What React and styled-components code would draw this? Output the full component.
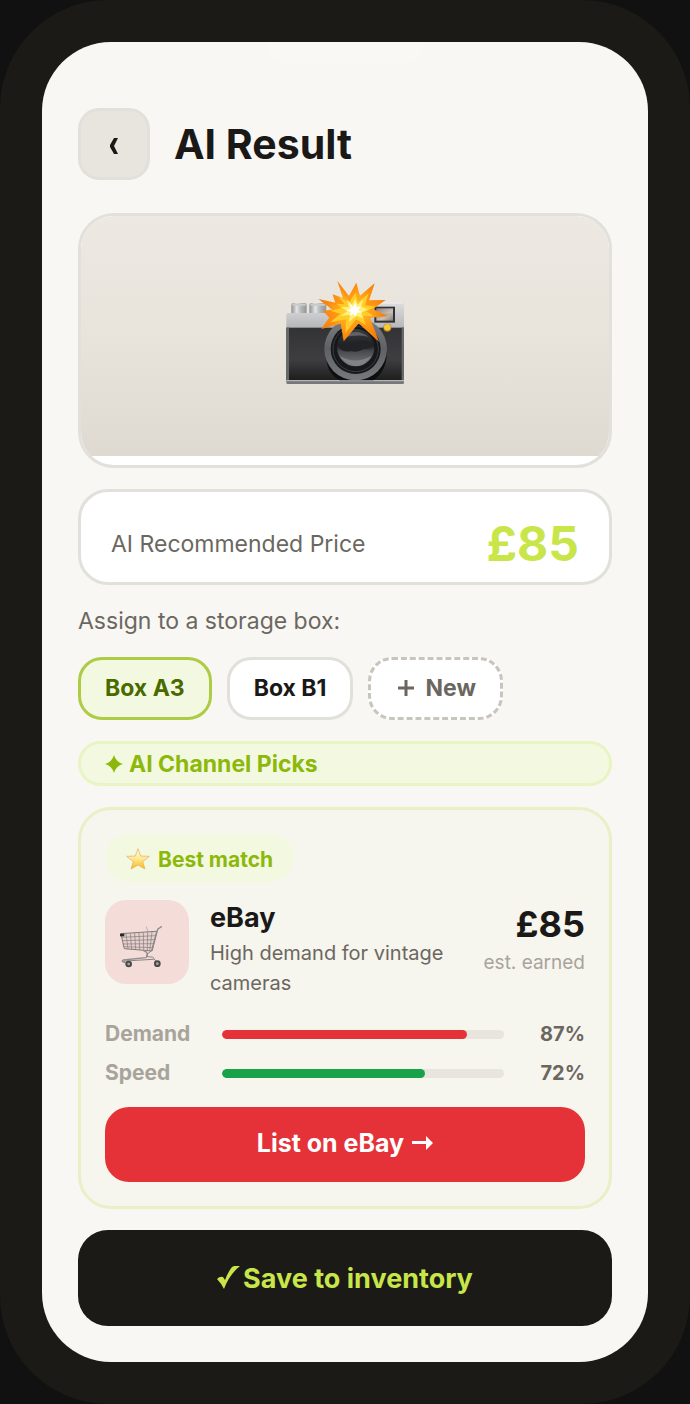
import { useState } from "react";
import styled, { createGlobalStyle } from "styled-components";

const GlobalStyle = createGlobalStyle`
  * {
    box-sizing: border-box;
  }

  body {
    margin: 0;
    background-color: #111111;
    color: #1a1917;
    font-family: Inter, "Liberation Sans", sans-serif;
  }

  h1, h2, p {
    margin: 0;
  }

  button {
    font-family: inherit;
    cursor: pointer;
  }
`;

const Phone = styled.div`
  padding: 42px;
  background-color: #1b1a17;
  border-radius: 108px;
`;

const Screen = styled.main`
  display: flex;
  flex-direction: column;
  padding: 0 36px 36px;
  background-color: #f8f7f3;
  border-radius: 69px;
  overflow: hidden;
`;

const Notch = styled.div`
  align-self: center;
  width: 156px;
  height: 21px;
  background-color: #f9f8f4;
  border-radius: 0 0 18px 18px;
`;

const Header = styled.header`
  display: flex;
  align-items: center;
  gap: 24px;
  margin: 45px 0 33px;
`;

const BackButton = styled.button`
  display: flex;
  align-items: center;
  justify-content: center;
  width: 72px;
  height: 72px;
  padding: 0;
  background-color: #e8e5df;
  border: 3px solid #e2e0da;
  border-radius: 21px;
`;

const Title = styled.h1`
  font-size: 41px;
  line-height: 48px;
  font-weight: 700;
`;

const Stack = styled.div`
  display: flex;
  flex-direction: column;
  gap: 21px;
`;

const PhotoCard = styled.div`
  padding-bottom: 9px;
  background-color: #ffffff;
  border: 3px solid #e2e0da;
  border-radius: 36px;
  overflow: hidden;
`;

const Photo = styled.div`
  display: flex;
  align-items: center;
  justify-content: center;
  height: 240px;
  background: linear-gradient(#ede8e1 0%, #e8e4dc 50%, #dedad2 100%);
`;

const PriceCard = styled.div`
  display: flex;
  align-items: center;
  justify-content: space-between;
  padding: 22px 30px 8px;
  background-color: #ffffff;
  border: 3px solid #e2e0da;
  border-radius: 30px;
`;

const Label = styled.p`
  font-size: 23px;
  line-height: 30px;
  color: #6b6760;
`;

const Price = styled.p`
  font-size: 48px;
  line-height: 60px;
  font-weight: 700;
  color: #c8e64a;
`;

const Chips = styled.div`
  display: flex;
  flex-wrap: wrap;
  gap: 15px;
`;

const Chip = styled.button`
  display: flex;
  align-items: center;
  gap: 9px;
  height: 63px;
  padding: 0 24px 2px;
  font-size: 23px;
  font-weight: 700;
  color: ${(p) => (p.$selected ? "#4a6a00" : "#1a1917")};
  background-color: ${(p) => (p.$selected ? "#f3f9e0" : "#ffffff")};
  border: 3px solid ${(p) => (p.$selected ? "#aecb45" : "#e2e0da")};
  border-radius: 24px;
`;

const NewChip = styled(Chip)`
  color: #6b6760;
  border: 3px dashed #c8c5bc;
`;

const PicksHeading = styled.h2`
  display: flex;
  align-items: center;
  gap: 6px;
  height: 45px;
  padding: 0 24px;
  font-size: 23px;
  font-weight: 700;
  color: #8cb80a;
  background-color: #f3f9e0;
  border: 3px solid #e9f4c4;
  border-radius: 24px;
`;

const MatchCard = styled.section`
  display: flex;
  flex-direction: column;
  padding: 24px;
  background-color: #f6f5ee;
  border: 3px solid #eaefc6;
  border-radius: 33px;
`;

const Badge = styled.div`
  align-self: flex-start;
  display: flex;
  align-items: center;
  gap: 8px;
  height: 48px;
  padding: 3px 21px 0;
  font-size: 21px;
  font-weight: 700;
  color: #8cb80a;
  background-color: #f3f9e0;
  border-radius: 24px;
`;

const Channel = styled.div`
  display: flex;
  gap: 21px;
  margin-top: 18px;
`;

const ChannelIcon = styled.div`
  flex-shrink: 0;
  width: 84px;
  height: 84px;
  background-color: #f4ddd8;
  border-radius: 21px;
`;

const ChannelInfo = styled.div`
  flex: 1;
`;

const ChannelName = styled.h2`
  font-size: 27px;
  line-height: 36px;
  font-weight: 700;
`;

const ChannelNote = styled.p`
  margin-top: 2px;
  font-size: 20px;
  line-height: 30px;
  color: #6b6760;
`;

const Earned = styled.div`
  text-align: right;
`;

const EarnedPrice = styled.p`
  font-size: 36px;
  line-height: 48px;
  font-weight: 700;
`;

const EarnedLabel = styled.p`
  font-size: 19px;
  line-height: 30px;
  color: #a8a49c;
`;

const Meters = styled.div`
  display: flex;
  flex-direction: column;
  gap: 9px;
  margin-top: 21px;
`;

const Meter = styled.div`
  display: grid;
  grid-template-columns: 96px 1fr 60px;
  column-gap: 21px;
  align-items: center;
  line-height: 30px;
  font-weight: 700;
`;

const MeterLabel = styled.span`
  font-size: 21px;
  color: #a8a49c;
`;

const MeterTrack = styled.div`
  height: 9px;
  background-color: #e8e5df;
  border-radius: 5px;
  overflow: hidden;
`;

const MeterFill = styled.div`
  height: 100%;
  background-color: ${(p) => p.$color};
  border-radius: 5px;
`;

const MeterValue = styled.span`
  font-size: 20px;
  text-align: right;
  color: #6b6760;
`;

const ActionButton = styled.button`
  display: flex;
  align-items: center;
  justify-content: center;
  gap: 8px;
  height: 75px;
  margin-top: 19px;
  padding: 0 0 3px;
  font-size: 25px;
  font-weight: 700;
  color: #ffffff;
  background-color: #e53238;
  border: none;
  border-radius: 24px;
`;

const SaveButton = styled(ActionButton)`
  gap: 3px;
  height: 96px;
  margin-top: 0;
  padding: 0;
  font-size: 27px;
  color: #c8e64a;
  background-color: #1b1a17;
  border-radius: 30px;
`;

function CameraIcon() {
  return (
    <svg width="120" height="120" viewBox="45 18 360 360" role="img" aria-label="Camera with flash">
      <defs>
        <linearGradient id="silver" x1="0" y1="0" x2="0" y2="1">
          <stop offset="0" stopColor="#dededf" />
          <stop offset="1" stopColor="#b5b6b8" />
        </linearGradient>
        <linearGradient id="knob">
          <stop offset="0" stopColor="#8f9092" />
          <stop offset="0.35" stopColor="#e4e4e5" />
          <stop offset="0.6" stopColor="#b9babc" />
          <stop offset="1" stopColor="#929395" />
        </linearGradient>
        <linearGradient id="leather" x1="0" y1="0" x2="0" y2="1">
          <stop offset="0" stopColor="#333335" />
          <stop offset="0.6" stopColor="#3e3e40" />
          <stop offset="1" stopColor="#1c1c1d" />
        </linearGradient>
        <linearGradient id="ring" x1="0" y1="0" x2="0" y2="1">
          <stop offset="0" stopColor="#7d7f82" />
          <stop offset="0.5" stopColor="#5f6164" />
          <stop offset="1" stopColor="#77797c" />
        </linearGradient>
        <linearGradient id="glass" x1="0" y1="0" x2="0" y2="1">
          <stop offset="0" stopColor="#3b3c3f" />
          <stop offset="0.45" stopColor="#1f2022" />
          <stop offset="0.6" stopColor="#4a4b4e" />
          <stop offset="1" stopColor="#77787b" />
        </linearGradient>
        <linearGradient id="finder" x1="0" y1="0" x2="1" y2="1">
          <stop offset="0" stopColor="#8d857f" />
          <stop offset="0.6" stopColor="#c9c0b8" />
          <stop offset="1" stopColor="#847c76" />
        </linearGradient>
        <radialGradient id="flash" gradientUnits="userSpaceOnUse" cx="251" cy="122" r="98">
          <stop offset="0" stopColor="#ffc422" />
          <stop offset="0.5" stopColor="#ffa51a" />
          <stop offset="1" stopColor="#f57c0c" />
        </radialGradient>
      </defs>
      <rect x="64" y="99" width="46" height="34" rx="6" fill="url(#knob)" />
      <rect x="118" y="99" width="51" height="34" rx="6" fill="url(#knob)" />
      <path d="M67 104H107M121 104H166" stroke="#c9cacb" strokeWidth="6" />
      <path d="M49 135q0 -6 6 -6H176V104q0 -7 7 -7H396q6 0 6 6V175H49z" fill="url(#silver)" />
      <path d="M178 99H398" stroke="#f2f2f2" strokeWidth="3" />
      <rect x="49" y="173" width="353" height="160" fill="url(#leather)" />
      <rect x="49" y="173" width="8" height="160" fill="#666769" />
      <rect x="395" y="173" width="7" height="160" fill="#66686a" />
      <path d="M49 331H402V338q0 4 -4 4H53q-4 0 -4 -4z" fill="#77787b" />
      <path d="M49 332H402" stroke="#c6c7c8" strokeWidth="3" />
      <rect x="313" y="110" width="62" height="48" fill="#323234" />
      <rect x="319" y="115" width="50" height="37" fill="url(#finder)" />
      <path d="M320 138q18 -10 48 -2" fill="none" stroke="#b3aaa3" strokeWidth="6" />
      <path d="M168 250q0 62 42 81H310q42 -30 40 -85z" fill="#0e0e0f" />
      <circle cx="257" cy="237" r="94" fill="url(#ring)" />
      <circle cx="257" cy="237" r="75" fill="#17181a" />
      <circle cx="257" cy="237" r="68" fill="none" stroke="#3b3c3f" strokeWidth="3" />
      <circle cx="257" cy="233" r="56" fill="url(#glass)" />
      <path d="M207 235q20 -22 48 -18q30 -14 52 8q-6 14 -26 12q-18 12 -38 6q-20 6 -36 -8z" fill="#232326" />
      <path d="M216 204q38 -35 80 -3q-30 -10 -80 3z" fill="#606266" />
      <path d="M209 258q48 27 96 -1q-18 30 -48 31q-30 -2 -48 -30z" fill="#818285" />
      <circle cx="352" cy="173" r="12" fill="#ae7a13" />
      <circle cx="352" cy="172" r="10" fill="#f6c83d" />
      <path d="M202 33 237 78 259 38 270 77 314 40 297 91 347 90 309 117 354 139 300 143 327 215 266 160 221 214 212 161 154 177 178 143 159 122 187 119 145 87 196 98 188 73 219 84z" fill="url(#flash)" />
      <path d="M202 33 237 78 259 38 251 122zM314 40 297 91 347 90 251 122zM327 215 266 160 221 214 251 122zM154 177 178 143 159 122 251 122zM145 87 196 98 188 73 251 122z" fill="#ff8a0b" opacity="0.45" />
      <path d="M205 78 237 98 256 68 264 97 296 70 285 106 317 110 288 124 312 139 278 138 287 165 258 148 226 190 229 148 181 157 211 131 181 122 216 114 199 101 224 103z" fill="#ffcc29" />
      <path d="M231 88 246 104 256 85 262 104 280 88 274 110 294 118 274 128 281 147 259 137 237 157 240 135 211 137 232 124 213 112 236 111z" fill="#fff07a" />
      <path d="M239 99 249 111 257 98 260 112 273 109 265 120 276 127 261 128 257 140 250 131 239 138 243 126 229 121 243 116z" fill="#ffffff" />
    </svg>
  );
}

function StarIcon() {
  return (
    <svg width="24" height="24" viewBox="166 145 72 68" aria-hidden="true">
      <defs>
        <linearGradient id="star" x1="0" y1="0" x2="0" y2="1">
          <stop offset="0" stopColor="#fffbe9" />
          <stop offset="0.5" stopColor="#ffe98f" />
          <stop offset="1" stopColor="#fcb614" />
        </linearGradient>
      </defs>
      <path d="M202 145 210 167 236 168 216 184 223 206 202 194 181 206 188 184 168 168 194 167z" fill="url(#star)" stroke="#e3a765" strokeWidth="2" strokeLinejoin="round" />
    </svg>
  );
}

function CartIcon() {
  return (
    <svg width="84" height="84" viewBox="105 300 252 252" role="img" aria-label="Shopping cart">
      <g fill="none" strokeLinecap="round" strokeLinejoin="round">
        <path d="M153 402 163 446 245 453 260 395z" fill="#8a7f7d" fillOpacity="0.12" stroke="#827b7b" strokeWidth="3" />
        <path d="M155 412 257 407M157 422 255 419M159 432 252 431M161 440 249 443M168 402 174 446M181 401 185 447M194 400 197 448M207 399 209 449M220 398 221 450M233 397 232 451M246 396 239 452" stroke="#817979" strokeWidth="2" />
        <path d="M229 381 234 397" stroke="#a39a99" strokeWidth="2" />
        <path d="M274 380 263 388 246 451" stroke="#8a8586" strokeWidth="4" />
        <path d="M221 452Q240 460 228 473L160 480Q152 485 164 486" stroke="#918d8e" strokeWidth="4" />
        <path d="M246 451 232 462Q222 472 248 471L262 489M158 485 174 491M164 483 250 478" stroke="#8a8586" strokeWidth="3" />
      </g>
      <rect x="150" y="401" width="13" height="8" fill="#29282b" />
      <circle cx="176" cy="492" r="10" fill="#4b494b" />
      <circle cx="176" cy="492" r="4" fill="#aaa7a7" />
      <circle cx="262" cy="491" r="10" fill="#4b494b" />
      <circle cx="262" cy="491" r="4" fill="#aaa7a7" />
    </svg>
  );
}

function BackIcon() {
  return (
    <svg width="10" height="22" viewBox="0 0 10 22" aria-hidden="true">
      <path d="M5 5H9L5 13 9 21H5L1 14V12z" fill="#1a1917" />
    </svg>
  );
}

function PlusIcon() {
  return (
    <svg width="21" height="21" viewBox="0 0 21 21" aria-hidden="true">
      <path d="M11 3V19M3 11H19" stroke="currentColor" strokeWidth="3" />
    </svg>
  );
}

function SparkIcon() {
  return (
    <svg width="18" height="18" viewBox="0 0 18 18" aria-hidden="true">
      <path d="M9 0Q11 7 18 9 11 11 9 18 7 11 0 9 7 7 9 0z" fill="currentColor" />
    </svg>
  );
}

function ArrowIcon() {
  return (
    <svg width="21" height="14" viewBox="0 0 21 14" aria-hidden="true">
      <path d="M0 5H14V0L21 7 14 14V8H0z" fill="currentColor" />
    </svg>
  );
}

function CheckIcon() {
  return (
    <svg width="23" height="24" viewBox="0 0 23 24" aria-hidden="true">
      <path d="M0 13Q3 10 6 11L8 14Q11 6 15 1 18 -1 23 0 12 9 7 23 4 17 0 13z" fill="currentColor" />
    </svg>
  );
}

const boxes = ["Box A3", "Box B1"];

const meters = [
  { label: "Demand", value: 87, color: "#e53238" },
  { label: "Speed", value: 72, color: "#18a34a" },
];

function ChannelMatch() {
  return (
    <MatchCard>
      <Badge>
        <StarIcon />
        Best match
      </Badge>
      <Channel>
        <ChannelIcon>
          <CartIcon />
        </ChannelIcon>
        <ChannelInfo>
          <ChannelName>eBay</ChannelName>
          <ChannelNote>High demand for vintage cameras</ChannelNote>
        </ChannelInfo>
        <Earned>
          <EarnedPrice>£85</EarnedPrice>
          <EarnedLabel>est. earned</EarnedLabel>
        </Earned>
      </Channel>
      <Meters>
        {meters.map((meter) => (
          <Meter key={meter.label}>
            <MeterLabel>{meter.label}</MeterLabel>
            <MeterTrack>
              <MeterFill $color={meter.color} style={{ width: `${meter.value}%` }} />
            </MeterTrack>
            <MeterValue>{meter.value}%</MeterValue>
          </Meter>
        ))}
      </Meters>
      <ActionButton type="button">
        List on eBay
        <ArrowIcon />
      </ActionButton>
    </MatchCard>
  );
}

function App() {
  const [box, setBox] = useState("Box A3");

  return (
    <>
      <GlobalStyle />
      <Phone>
        <Screen>
          <Notch />
          <Header>
            <BackButton type="button" aria-label="Back">
              <BackIcon />
            </BackButton>
            <Title>AI Result</Title>
          </Header>
          <Stack>
            <PhotoCard>
              <Photo>
                <CameraIcon />
              </Photo>
            </PhotoCard>
            <PriceCard>
              <Label>AI Recommended Price</Label>
              <Price>£85</Price>
            </PriceCard>
            <Label>Assign to a storage box:</Label>
            <Chips>
              {boxes.map((name) => (
                <Chip
                  key={name}
                  type="button"
                  $selected={box === name}
                  aria-pressed={box === name}
                  onClick={() => setBox(name)}
                >
                  {name}
                </Chip>
              ))}
              <NewChip type="button">
                <PlusIcon />
                New
              </NewChip>
            </Chips>
            <PicksHeading>
              <SparkIcon />
              AI Channel Picks
            </PicksHeading>
            <ChannelMatch />
            <SaveButton type="button">
              <CheckIcon />
              Save to inventory
            </SaveButton>
          </Stack>
        </Screen>
      </Phone>
    </>
  );
}

export default App;
